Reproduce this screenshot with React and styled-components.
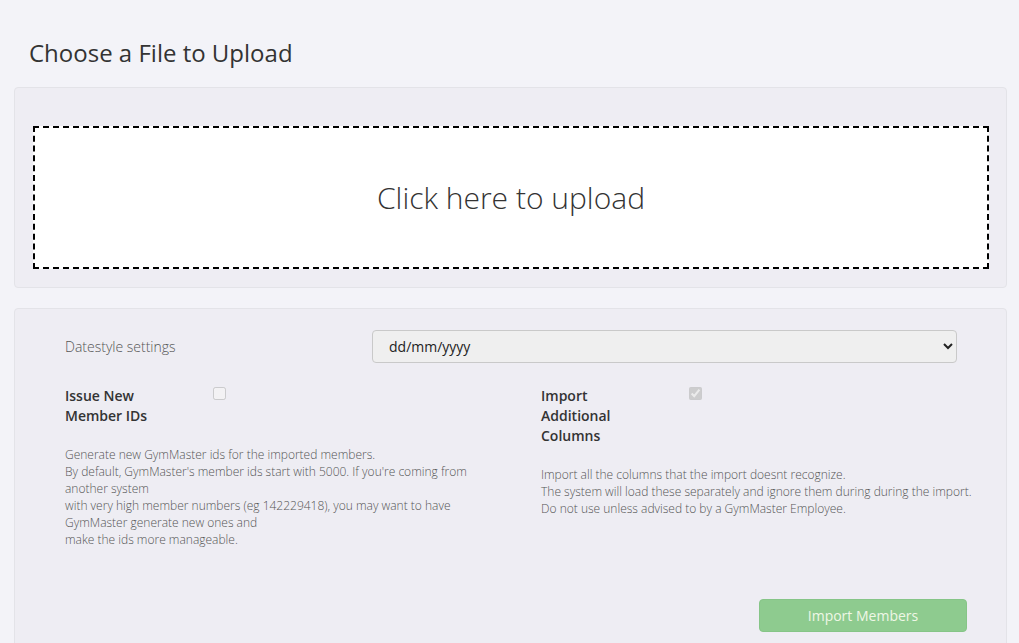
import React from 'react';
import styled, { createGlobalStyle } from 'styled-components';

const GlobalStyle = createGlobalStyle`
    body {
        margin: 0;
        background: #f3f3f8;
        font-family: "Open Sans", "DejaVu Sans", sans-serif;
        color: #333;
    }
`

const App = () => {
    return (
        <Page>
            <GlobalStyle/>
            <Heading>Choose a File to Upload</Heading>
            <Panel padding='38px 17px 18px 18px'>
                <DropZone>Click here to upload</DropZone>
            </Panel>
            <Panel padding='21px 49px 30px 50px' gap='20px'>
                <SettingRow>
                    <SettingLabel>Datestyle settings</SettingLabel>
                    <Select defaultValue='dd/mm/yyyy'>
                        <option>dd/mm/yyyy</option>
                        <option>mm/dd/yyyy</option>
                        <option>yyyy/mm/dd</option>
                    </Select>
                </SettingRow>
                <Options>
                    <Option>
                        <OptionHead>
                            <OptionTitle>Issue New<br/>Member IDs</OptionTitle>
                            <Check type='checkbox' disabled/>
                        </OptionHead>
                        <Description width='440px'>
                            Generate new GymMaster ids for the imported members.<br/>
                            By default, GymMaster's member ids start with 5000. If you're coming from another system<br/>
                            with very high member numbers (eg 142229418), you may want to have GymMaster generate new ones and<br/>
                            make the ids more manageable.
                        </Description>
                    </Option>
                    <Option>
                        <OptionHead>
                            <OptionTitle>Import<br/>Additional<br/>Columns</OptionTitle>
                            <Check type='checkbox' defaultChecked disabled/>
                        </OptionHead>
                        <Description width='450px'>
                            Import all the columns that the import doesnt recognize.<br/>
                            The system will load these separately and ignore them during during the import.<br/>
                            Do not use unless advised to by a GymMaster Employee.
                        </Description>
                    </Option>
                </Options>
                <Actions>
                    <ImportButton disabled>Import Members</ImportButton>
                </Actions>
            </Panel>
        </Page>
    );
}

const Page = styled.div`
    padding: 37px 12px 0 14px;
    display: flex;
    flex-direction: column;
`

const Heading = styled.h2`
    margin: 0 0 18px 15px;
    font-size: 24px;
    font-weight: 400;
    line-height: 32px;
    color: #333;
`

const Panel = styled.div`
    display: flex;
    flex-direction: column;
    gap: ${p => p.gap || '0'};
    padding: ${p => p.padding};
    background: #eeedf3;
    border: 1px solid #e3e3e8;
    border-radius: 4px;
    margin-bottom: 20px;
`

const DropZone = styled.div`
    height: 139px;
    display: flex;
    align-items: center;
    justify-content: center;
    background: #fff;
    border: 2px dashed #000;
    font-size: 30px;
    font-weight: 300;
    color: #333;
    cursor: pointer;
`

const SettingRow = styled.div`
    display: flex;
    align-items: center;
`

const SettingLabel = styled.label`
    width: 307px;
    font-size: 14px;
    font-weight: 300;
    color: #555;
`

const Select = styled.select`
    flex: 1;
    height: 33px;
    padding: 0 12px;
    font-family: "Open Sans", sans-serif;
    font-size: 14px;
    color: #222;
    background: #efefef;
    border: 1px solid #c9c9c9;
    border-radius: 4px;
`

const Options = styled.div`
    display: grid;
    grid-template-columns: 476px 1fr;
    margin: 3px -40px 0 0;
`

const Option = styled.div`
    display: flex;
    flex-direction: column;
    gap: 20px;
`

const OptionHead = styled.div`
    display: flex;
    align-items: flex-start;
`

const OptionTitle = styled.div`
    width: 148px;
    font-size: 14px;
    font-weight: 600;
    line-height: 20px;
    color: #333;
`

const Check = styled.input`
    margin: 1px 0 0 0;
    width: 13px;
    height: 13px;
`

const Description = styled.p`
    margin: 0;
    font-size: 12px;
    font-weight: 300;
    line-height: 17px;
    color: #555;
    max-width: ${p => p.width};
`

const Actions = styled.div`
    display: flex;
    justify-content: flex-end;
    margin: 31px -10px 0 0;
`

const ImportButton = styled.button`
    width: 208px;
    height: 33px;
    background: #8ecb8f;
    border: 1px solid #86c587;
    border-radius: 4px;
    color: #eef7e6;
    font-family: "Open Sans", sans-serif;
    font-size: 14px;
`

export default App;
